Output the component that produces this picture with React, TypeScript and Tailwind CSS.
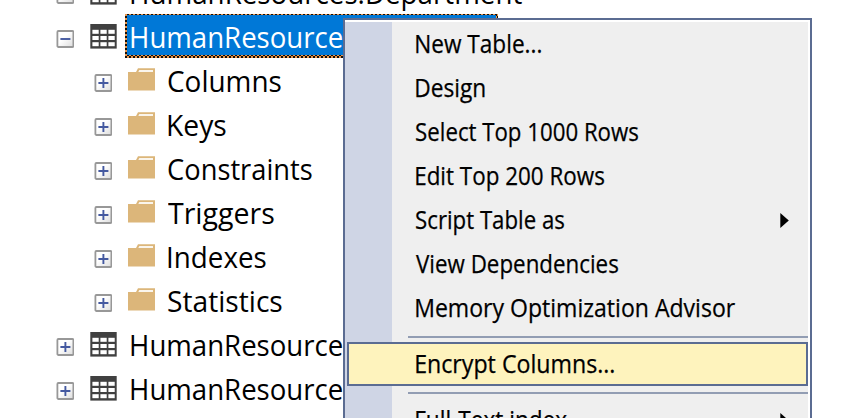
import React from 'react';

const ctx = document.createElement('canvas').getContext('2d')!;

/* Text fitted so that its ink spans exactly `width` pixels. */
function Label({ text, size, width }: { text: string; size: number; width: number }) {
  ctx.font = `${size}px "Open Sans"`;
  const m = ctx.measureText(text);
  const scale = width / (m.actualBoundingBoxRight + m.actualBoundingBoxLeft);
  return (
    <span
      className="block origin-left whitespace-pre"
      style={{ fontSize: size, transform: `translateX(${m.actualBoundingBoxLeft * scale}px) scaleX(${scale})` }}
    >
      {text}
    </span>
  );
}

function Expander({ open = false }: { open?: boolean }) {
  return (
    <svg className="mt-[6px] h-[18px] w-[18px] shrink-0" viewBox="0 0 18 18">
      <defs>
        <linearGradient id="face" x1="0" y1="0" x2="1" y2="1">
          <stop offset="0.4" stopColor="#ffffff" />
          <stop offset="1" stopColor="#dcdcdc" />
        </linearGradient>
      </defs>
      <rect x="1.4" y="1" width="16" height="16" rx="1" fill="url(#face)" stroke="#989898" strokeWidth="1.8" />
      <path d={open ? 'M4.4 9H14.4' : 'M4.4 9H14.4M9.4 4V14'} stroke="#4459a0" strokeWidth="1.9" />
    </svg>
  );
}

function TableIcon() {
  return (
    <svg className="h-[25px] w-[27px] shrink-0" viewBox="0 0 27 25">
      <path d="M0.3 0H26.7V24.6H0.3Z" fill="#404040" />
      {[5.8, 12, 18.2].map((y) =>
        [2.4, 10.4, 18.4].map((x) => <rect key={`${x}-${y}`} x={x} y={y} width="6.3" height="4" fill="#fff" />),
      )}
    </svg>
  );
}

function FolderIcon() {
  return (
    <svg className="h-[23px] w-[27px] shrink-0" viewBox="0 0 27 23">
      <path d="M0 4H8L10 0.3H27V22.5H0Z" fill="#dcb67a" />
      <path d="M11.3 2H25V4H10.3Z" fill="#faf5ec" />
    </svg>
  );
}

function TableRow({ text, width, open = false }: { text: string; width: number; open?: boolean }) {
  return (
    <div className="flex h-11 items-center pl-[56px]">
      <Expander open={open} />
      <div className="ml-4 h-[25px] w-[27px]"><TableIcon /></div>
      <div className={open ? 'ml-2 h-11 w-[373px] bg-[repeating-conic-gradient(#14100c_0%_25%,#e8944a_25%_50%)] bg-[length:4px_4px] p-[2px] text-white' : 'ml-2 h-11 w-[373px] p-[2px]'}>
        <div className={open ? 'h-10 bg-[#0078d7] pl-1' : 'h-10 pl-1'}>
          <div className="-mt-px"><Label text={text} size={29} width={width} /></div>
        </div>
      </div>
    </div>
  );
}

function FolderRow({ text, width }: { text: string; width: number }) {
  return (
    <div className="flex h-11 items-center pl-[94px]">
      <Expander />
      <div className="-mt-[2px] ml-4"><FolderIcon /></div>
      <div className="ml-[13px] mt-[2px]"><Label text={text} size={29} width={width} /></div>
    </div>
  );
}

const folders: [string, number][] = [
  ['Columns', 113], ['Keys', 58], ['Constraints', 144], ['Triggers', 106], ['Indexes', 98], ['Statistics', 114],
];

const items: [string, number][] = [
  ['New Table...', 125], ['Design', 69], ['Select Top 1000 Rows', 222], ['Edit Top 200 Rows', 188],
  ['Script Table as', 148], ['View Dependencies', 202], ['Memory Optimization Advisor', 319],
];

function MenuItem({ text, width, submenu = false }: { text: string; width: number; submenu?: boolean }) {
  return (
    <div className="flex h-11 shrink-0 items-start justify-between pl-[71px] pr-[19px]">
      <div className="-mt-px"><Label text={text} size={25} width={width} /></div>
      {submenu && (
        <svg className="mt-[15px] h-[15px] w-[9px]" viewBox="0 0 9 15"><path d="M0.3 0L8.8 7.5L0.3 15Z" fill="#000" /></svg>
      )}
    </div>
  );
}

function Separator() {
  return <div className="flex h-3 shrink-0 items-end pb-1 pl-[63px]"><div className="h-[2px] w-full bg-[#929db3]" /></div>;
}

export default function App() {
  return (
    <div className="relative h-[418px] w-[842px] overflow-hidden bg-white font-['Open_Sans','Noto_Sans',sans-serif] leading-[44px] text-black">
      <div className="-mt-[30px]">
        <TableRow text="HumanResources.Department" width={391} />
        <TableRow text="HumanResource" width={211} open />
        {folders.map(([t, w]) => <FolderRow key={t} text={t} width={w} />)}
        <TableRow text="HumanResource" width={211} />
        <TableRow text="HumanResource" width={211} />
      </div>
      <div className="absolute left-[343px] top-[18px] h-[440px] w-[469px] border-2 border-[#5b6c92] bg-[#efefef] [-webkit-text-stroke:0.25px_black]">
        <div className="flex h-full flex-col border-y-2 border-r-2 border-white bg-[linear-gradient(to_right,#cfd5e5_47px,#efefef_47px)]">
          {items.map(([t, w]) => <MenuItem key={t} text={t} width={w} submenu={t === 'Script Table as'} />)}
          <Separator />
          <div className="ml-[2px] h-11 shrink-0 border-2 border-[#5b6c92] bg-[#fef3bd] pl-[67px]">
            <div className="-mt-[3px]"><Label text="Encrypt Columns..." size={25} width={198} /></div>
          </div>
          <Separator />
          <MenuItem text="Full-Text index" width={151} submenu />
        </div>
      </div>
    </div>
  );
}
